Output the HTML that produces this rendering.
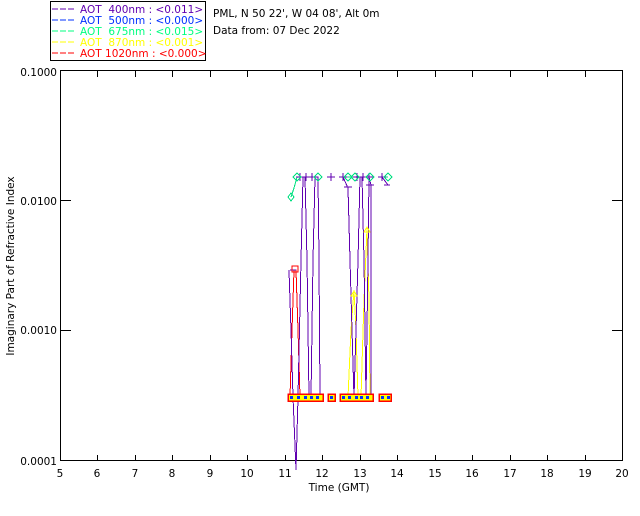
<!DOCTYPE html>
<html><head><style>
body{margin:0;background:#fff;width:640px;height:512px;overflow:hidden;font-family:"DejaVu Sans","Liberation Sans",sans-serif}
svg text{font-family:"DejaVu Sans","Liberation Sans",sans-serif;font-size:10.5px}
</style></head><body>
<svg width="640" height="512" xmlns="http://www.w3.org/2000/svg" shape-rendering="crispEdges">
<rect x="50.5" y="1.5" width="155" height="59" fill="none" stroke="#000"/>
<g font-size="10.5">
<line x1="52" y1="9" x2="75" y2="9" stroke="#6000b0" stroke-dasharray="6,2"/><text x="80" y="13" fill="#6000b0" xml:space="preserve">AOT  400nm : &lt;0.011&gt;</text>
<line x1="52" y1="20" x2="75" y2="20" stroke="#0030ff" stroke-dasharray="6,2"/><text x="80" y="24" fill="#0030ff" xml:space="preserve">AOT  500nm : &lt;0.000&gt;</text>
<line x1="52" y1="31" x2="75" y2="31" stroke="#00ff80" stroke-dasharray="6,2"/><text x="80" y="35" fill="#00ff80" xml:space="preserve">AOT  675nm : &lt;0.015&gt;</text>
<line x1="52" y1="42" x2="75" y2="42" stroke="#ffff00" stroke-dasharray="6,2"/><text x="80" y="46" fill="#ffff00" xml:space="preserve">AOT  870nm : &lt;0.001&gt;</text>
<line x1="52" y1="53" x2="75" y2="53" stroke="#ff0000" stroke-dasharray="6,2"/><text x="80" y="57" fill="#ff0000" xml:space="preserve">AOT 1020nm : &lt;0.000&gt;</text>
</g>
<text x="213" y="17">PML, N 50 22', W 04 08', Alt 0m</text>
<text x="213" y="34">Data from: 07 Dec 2022</text>
<rect x="60.5" y="70.5" width="562" height="390" fill="none" stroke="#000"/>
<g stroke="#000">
<path d="M97.5 461v-6M135.5 461v-6M172.5 461v-6M210.5 461v-6M247.5 461v-6M285.5 461v-6M322.5 461v-6M360.5 461v-6M397.5 461v-6M435.5 461v-6M472.5 461v-6M510.5 461v-6M547.5 461v-6M585.5 461v-6"/>
<path d="M97.5 71v6M135.5 71v6M172.5 71v6M210.5 71v6M247.5 71v6M285.5 71v6M322.5 71v6M360.5 71v6M397.5 71v6M435.5 71v6M472.5 71v6M510.5 71v6M547.5 71v6M585.5 71v6"/>
<path d="M60 200.5h11M60 330.5h11M612 200.5h11M612 330.5h11"/>
</g>
<g text-anchor="end"><text x="57" y="76">0.1000</text><text x="57" y="205">0.0100</text><text x="57" y="334">0.0010</text><text x="57" y="465">0.0001</text></g>
<g text-anchor="middle">
<text x="60" y="477">5</text><text x="97" y="477">6</text><text x="135" y="477">7</text><text x="172" y="477">8</text><text x="210" y="477">9</text><text x="247" y="477">10</text><text x="285" y="477">11</text><text x="322" y="477">12</text><text x="360" y="477">13</text><text x="397" y="477">14</text><text x="435" y="477">15</text><text x="472" y="477">16</text><text x="510" y="477">17</text><text x="547" y="477">18</text><text x="585" y="477">19</text><text x="622" y="477">20</text>
<text x="339" y="491">Time (GMT)</text>
</g>
<text transform="translate(14,266) rotate(-90)" text-anchor="middle">Imaginary Part of Refractive Index</text>
<g fill="none" stroke-width="1">
<polyline stroke="#00e080" points="291,197 294,188 297,177 304,177 318,177"/>
<polyline stroke="#00e080" points="343,177 370,177"/><polyline stroke="#00e080" points="382,177 388,177"/>
<polyline stroke="#ff0000" points="290,397 292,330 294,270 296,270 298,330 300,397 302,397"/>
<polyline stroke="#ffff00" points="348,397 351,330 354,290 356,330 358,397 361,397 364,300 367,228 369,300 370,397"/>
<polyline stroke="#6000b0" points="289,270 291,330 293,397 296,470 298,397 301,260 303,177 305,177 307,260 309,397 311,397 313,260 315,177 318,177 319,260 320,397"/>
<polyline stroke="#6000b0" points="343,177 348,188 350,260 352,330 354,397 356,330 358,260 360,177 362,177 364,260 366,397 368,260 369,177 371,185 371,397"/>
<polyline stroke="#6000b0" points="382,177 388,185"/>
<path stroke="#6000b0" d="M290 270h6M344 187h8M366 185h8M384 185h6M300 173v8M296 177h8M306 173v8M302 177h8M312 173v8M308 177h8M331 173v8M327 177h8M343 173v8M339 177h8M357 173v8M353 177h8M363 173v8M359 177h8M369 173v8M365 177h8M382 173v8M378 177h8"/>
<g stroke="#00e080"><path d="M291 193l3 4-3 4-3-4zM297 173l4 4-4 4-4-4zM318 173l4 4-4 4-4-4zM348 173l4 4-4 4-4-4zM355 173l4 4-4 4-4-4zM370 173l4 4-4 4-4-4zM388 173l4 4-4 4-4-4z"/></g>
<rect x="292" y="266" width="6" height="6" stroke="#ff0000"/>
<path stroke="#ffff00" d="M351 296l3-5 3 5zM364 232l3-5 3 5z"/>
</g>
<g>
<rect x="288" y="394" width="35" height="7" fill="#ffff00" stroke="#ff0000" stroke-width="1.5"/>
<rect x="328" y="394" width="7" height="7" fill="#ffff00" stroke="#ff0000" stroke-width="1.5"/>
<rect x="340" y="394" width="33" height="7" fill="#ffff00" stroke="#ff0000" stroke-width="1.5"/>
<rect x="379" y="394" width="12" height="7" fill="#ffff00" stroke="#ff0000" stroke-width="1.5"/>
<g fill="#0030ff"><rect x="290" y="396" width="3" height="3"/><rect x="297" y="396" width="3" height="3"/><rect x="304" y="396" width="3" height="3"/><rect x="310" y="396" width="3" height="3"/><rect x="316" y="396" width="3" height="3"/><rect x="330" y="396" width="3" height="3"/><rect x="342" y="396" width="3" height="3"/><rect x="348" y="396" width="3" height="3"/><rect x="355" y="396" width="3" height="3"/><rect x="360" y="396" width="3" height="3"/><rect x="366" y="396" width="3" height="3"/><rect x="381" y="396" width="3" height="3"/><rect x="387" y="396" width="3" height="3"/></g>
</g>
</svg>
</body></html>
